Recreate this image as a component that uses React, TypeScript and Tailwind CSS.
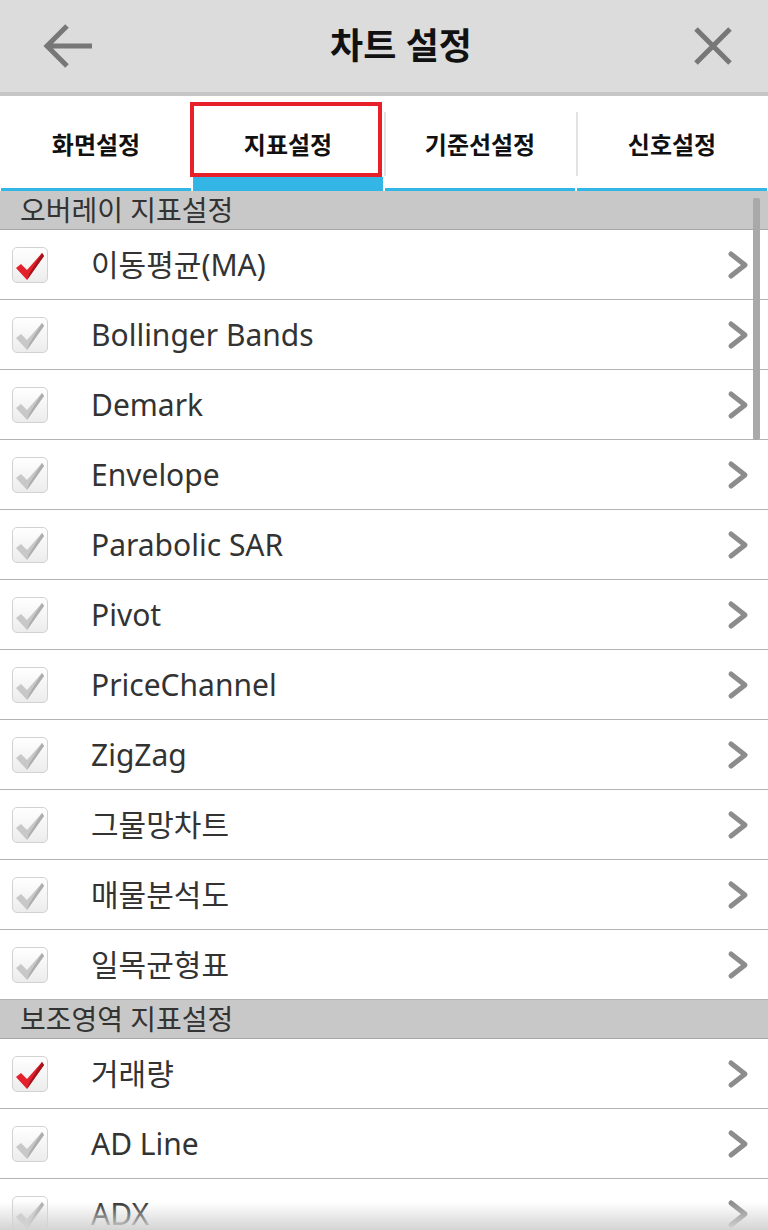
import React from 'react';

const font = { fontFamily: '"Noto Sans", "Noto Sans CJK KR", sans-serif' };

type Item = { label: string; checked: boolean };

const overlay: Item[] = [
  { label: '이동평균(MA)', checked: true },
  { label: 'Bollinger Bands', checked: false },
  { label: 'Demark', checked: false },
  { label: 'Envelope', checked: false },
  { label: 'Parabolic SAR', checked: false },
  { label: 'Pivot', checked: false },
  { label: 'PriceChannel', checked: false },
  { label: 'ZigZag', checked: false },
  { label: '그물망차트', checked: false },
  { label: '매물분석도', checked: false },
  { label: '일목균형표', checked: false },
];

const sub: Item[] = [
  { label: '거래량', checked: true },
  { label: 'AD Line', checked: false },
  { label: 'ADX', checked: false },
];

function CheckBox({ checked }: { checked: boolean }) {
  return (
    <div className="w-[36px] h-[36px] rounded-[5px] border border-[#d2d2d2] bg-gradient-to-b from-white to-[#ececec] shrink-0">
      <svg width="34" height="34" viewBox="0 0 34 34">
        <path d="M3 20 L8 16 L14 22 L29 5 L31 8 L14 32 Z" fill={checked ? '#e3202b' : '#c8c8c8'} />
        <path d="M29 5 L31 8 L14 32 L16 26 Z" fill={checked ? '#a5141c' : '#adadad'} />
      </svg>
    </div>
  );
}

function Chevron() {
  return (
    <svg width="24" height="30" viewBox="0 0 24 30" className="shrink-0">
      <polyline points="5,4 19,15 5,26" fill="none" stroke="#8c8c8c" strokeWidth="5" strokeLinecap="round" strokeLinejoin="round" />
    </svg>
  );
}

function Row({ item }: { item: Item }) {
  return (
    <div className="h-[70px] flex items-center border-b border-[#b4b4b4] pl-[12px] pr-[18px]">
      <CheckBox checked={item.checked} />
      <span className="ml-[43px] flex-1 text-[30px] text-[#333333] leading-none">{item.label}</span>
      <Chevron />
    </div>
  );
}

function Section({ title }: { title: string }) {
  return (
    <div className="h-[39px] bg-[#c8c8c8] border-b border-[#a8a8a8] flex items-center pl-[20px]">
      <span className="text-[28px] text-[#333333] leading-none">{title}</span>
    </div>
  );
}

const tabs = ['화면설정', '지표설정', '기준선설정', '신호설정'];

export default function App() {
  return (
    <div className="relative w-[768px] h-[1230px] overflow-hidden bg-white" style={font}>
      {/* header */}
      <div className="h-[96px] bg-[#dcdcdc] border-b-[4px] border-[#c6c6c6] flex items-center pl-[42px] pr-[32px]">
        <svg width="52" height="46" viewBox="0 0 52 46" className="shrink-0">
          <path d="M25 3 L5 23 L25 43 M5 23 L50 23" fill="none" stroke="#777777" strokeWidth="5" />
        </svg>
        <h1 className="flex-1 text-center pl-[18px] text-[36px] font-bold text-[#111111] leading-none">차트 설정</h1>
        <svg width="46" height="46" viewBox="0 0 46 46" className="shrink-0">
          <path d="M6 6 L40 40 M40 6 L6 40" fill="none" stroke="#777777" strokeWidth="5" />
        </svg>
      </div>

      {/* tabs */}
      <div className="h-[95px] flex">
        {tabs.map((t, i) => (
          <div key={t} className="relative flex-1 flex flex-col px-[1px]">
            <div className="h-[81px] pt-[16px] flex items-center justify-center">
              <span className="text-[24px] font-bold text-[#111111] leading-none">{t}</span>
            </div>
            <div className="h-[14px] flex flex-col justify-end">
              <div className={i === 1 ? 'h-[14px] bg-[#33b5e5]' : 'h-[3px] bg-[#33b5e5]'} />
            </div>
            {i > 1 && <div className="absolute left-0 top-[16px] h-[64px] w-[2px] bg-[#e2e2e2]" />}
            {i === 1 && <div className="absolute left-[-2px] right-[2px] top-[6px] h-[75px] border-[4px] border-[#e8202a]" />}
          </div>
        ))}
      </div>

      <Section title="오버레이 지표설정" />
      {overlay.map((it) => (
        <Row key={it.label} item={it} />
      ))}
      <Section title="보조영역 지표설정" />
      {sub.map((it) => (
        <Row key={it.label} item={it} />
      ))}

      {/* scrollbar */}
      <div className="absolute left-[753px] top-[198px] w-[7px] h-[242px] rounded-[2px] bg-[#a9a9a9]" />
      {/* bottom fade */}
      <div className="absolute left-0 right-0 bottom-0 h-[28px] bg-gradient-to-b from-white/0 to-[#d4d4d4]" />
    </div>
  );
}
